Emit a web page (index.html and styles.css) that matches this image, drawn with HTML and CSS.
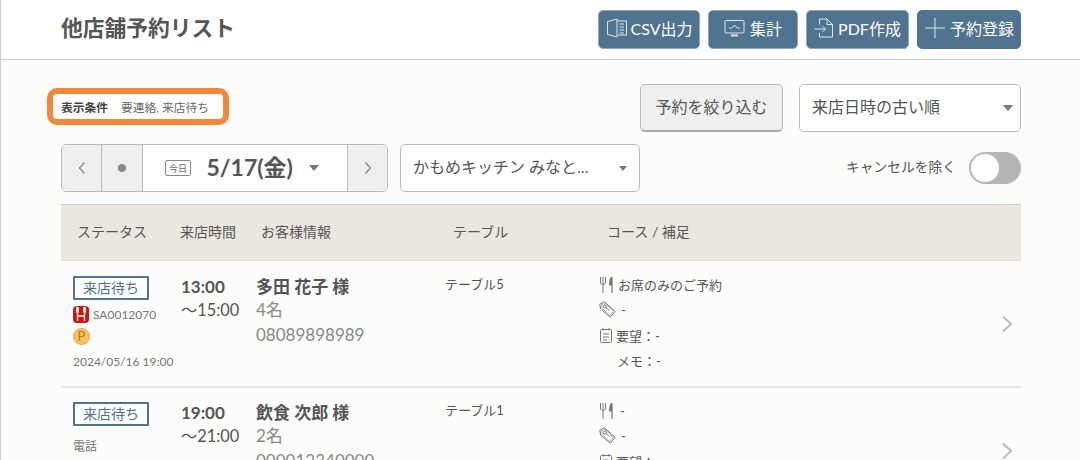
FILE: index.html
```html
<!DOCTYPE html>
<html lang="ja">
<head>
<meta charset="utf-8">
<title>他店舗予約リスト</title>
<link rel="stylesheet" href="styles.css">
</head>
<body>
<div class="page">
  <header class="topbar">
    <h1 class="title">他店舗予約リスト</h1>
    <div class="actions">
      <button class="act act-csv">
        <svg class="ic" width="22" height="20" viewBox="0 0 22 20" fill="none" stroke="#dfe6ec" stroke-width="1"><path d="M1.500 3.500 11 1v18l-9.500-2.500Z"/><path d="M11 3h9.500v14H11"/><path d="M13.500 6h4.500M13.500 9h4.500M13.500 12h4.500M13.500 15h4.500"/></svg>
        <span>CSV出力</span>
      </button>
      <button class="act act-sum">
        <svg class="ic" width="21" height="18" viewBox="0 0 21 18" fill="none" stroke="#dfe6ec" stroke-width="1"><rect x="1" y="1.500" width="19" height="12.500" rx="1"/><path d="M5 9h3l2.500-3 2.500 3h3"/><path d="M7 16.500h7" stroke-width="2"/></svg>
        <span>集計</span>
      </button>
      <button class="act act-pdf">
        <svg class="ic" width="20" height="20" viewBox="0 0 20 20" fill="none" stroke="#dfe6ec" stroke-width="1"><path d="M5.500 6.500V1H13l5.500 5.500V19h-13v-4"/><path d="M13 1v5.500h5.500"/><path d="M.500 11h11M8.500 8l3 3-3 3"/></svg>
        <span>PDF作成</span>
      </button>
      <button class="act act-add">
        <svg class="ic" width="22" height="22" viewBox="0 0 22 22" fill="none" stroke="#dfe6ec" stroke-width="1"><path d="M11 1v20M1 11h20"/></svg>
        <span>予約登録</span>
      </button>
    </div>
  </header>
  <main class="content">
    <div class="row-filter">
      <div class="cond"><b>表示条件</b><span>要連絡, 来店待ち</span></div>
      <div class="filter-right">
        <button class="narrow">予約を絞り込む</button>
        <div class="select sort"><span>来店日時の古い順</span><i class="caret"></i></div>
      </div>
    </div>
    <div class="row-date">
      <div class="datenav">
        <div class="dn-btn dn-prev"><svg width="8" height="14" viewBox="0 0 8 14" fill="none" stroke="#888" stroke-width="1.300"><path d="M6.500 1.500 1.500 7l5 5.500"/></svg></div>
        <div class="dn-btn dn-dot"><i class="dot"></i></div>
        <div class="dn-mid"><span class="today">今日</span><span class="date">5/17(金)</span><i class="caret"></i></div>
        <div class="dn-btn dn-next"><svg width="8" height="14" viewBox="0 0 8 14" fill="none" stroke="#888" stroke-width="1.300"><path d="M1.500 1.500 6.500 7l-5 5.500"/></svg></div>
      </div>
      <div class="select shop"><span>かもめキッチン みなと...</span><i class="caret small"></i></div>
      <div class="toggle-wrap"><span>キャンセルを除く</span><div class="toggle"><i></i></div></div>
    </div>
    <div class="thead">
      <div class="c1">ステータス</div>
      <div class="c2">来店時間</div>
      <div class="c3">お客様情報</div>
      <div class="c4">テーブル</div>
      <div class="c5">コース / 補足</div>
    </div>
    <section class="rec">
      <div class="c1">
        <div class="badge">来店待ち</div>
        <div class="src"><svg width="16" height="17" viewBox="0 0 16 17"><rect width="16" height="17" rx="4" fill="#d5140f"/><path d="M4.500 6v9M11.500 6v9M4.500 10h7" stroke="#fff" stroke-width="1.300" fill="none"/><path d="M4.500 2v4M11.500 2v4" stroke="#fff" stroke-width="2.600" stroke-linecap="round" fill="none"/></svg><span>SA0012070</span></div>
        <div class="point">P</div>
        <div class="stamp">2024/05/16 19:00</div>
      </div>
      <div class="c2"><div class="t-main">13:00</div><div class="t-sub">〜15:00</div></div>
      <div class="c3"><div class="name">多田 花子 様</div><div class="info">4名</div><div class="info">08089898989</div></div>
      <div class="c4 tbl">テーブル5</div>
      <div class="c5 notes">
        <div class="note"><svg class="ni" width="16" height="18" viewBox="0 0 16 18" fill="none" stroke="#777"><path d="M1.500 1v5c0 2 1.500 2.500 2.500 2.500S6.500 8 6.500 6V1M4 1v16"/><path d="M12.500 1C10.800 2.500 10.500 6 10.500 9h2V1Z" fill="#777"/><path d="M13 1v16" stroke-width="1.200"/></svg><span>お席のみのご予約</span></div>
        <div class="note"><svg class="ni" width="17" height="17" viewBox="0 0 17 17" fill="none" stroke="#777"><path d="M.800 3 5.500.800l10.700 9.700-5 5.700L1.500 8Z"/><path d="M2.500 3.800 5.800 2.400l8.700 8-3.500 4L3 7.300Z" stroke-width=".6"/><circle cx="5.800" cy="5.500" r="1.500"/><path d="M7 6.500l3.500 3"/></svg><span class="dash">-</span></div>
        <div class="note"><svg class="ni" width="14" height="16" viewBox="0 0 14 16" fill="none" stroke="#777"><rect x="1.500" y="2.500" width="11" height="13" rx="1"/><path d="M4 1v2.500M10 1v2.500M4 7h6M4 10h6M4 13h4"/></svg><span>要望：-</span></div>
        <div class="note memo"><span>メモ：-</span></div>
      </div>
      <div class="chev"><svg width="12" height="18" viewBox="0 0 12 18" fill="none" stroke="#bbb" stroke-width="2"><path d="M2 1.500 10 9l-8 7.500"/></svg></div>
    </section>
    <section class="rec">
      <div class="c1">
        <div class="badge">来店待ち</div>
        <div class="src phone">電話</div>
      </div>
      <div class="c2"><div class="t-main">19:00</div><div class="t-sub">〜21:00</div></div>
      <div class="c3"><div class="name">飲食 次郎 様</div><div class="info">2名</div><div class="info">000012340000</div></div>
      <div class="c4 tbl">テーブル1</div>
      <div class="c5 notes">
        <div class="note"><svg class="ni" width="16" height="18" viewBox="0 0 16 18" fill="none" stroke="#777"><path d="M1.500 1v5c0 2 1.500 2.500 2.500 2.500S6.500 8 6.500 6V1M4 1v16"/><path d="M12.500 1C10.800 2.500 10.500 6 10.500 9h2V1Z" fill="#777"/><path d="M13 1v16" stroke-width="1.200"/></svg><span class="dash">-</span></div>
        <div class="note"><svg class="ni" width="17" height="17" viewBox="0 0 17 17" fill="none" stroke="#777"><path d="M.800 3 5.500.800l10.700 9.700-5 5.700L1.500 8Z"/><path d="M2.500 3.800 5.800 2.400l8.700 8-3.500 4L3 7.300Z" stroke-width=".6"/><circle cx="5.800" cy="5.500" r="1.500"/><path d="M7 6.500l3.500 3"/></svg><span class="dash">-</span></div>
        <div class="note"><svg class="ni" width="14" height="16" viewBox="0 0 14 16" fill="none" stroke="#777"><rect x="1.500" y="2.500" width="11" height="13" rx="1"/><path d="M4 1v2.500M10 1v2.500M4 7h6M4 10h6M4 13h4"/></svg><span>要望：-</span></div>
      </div>
      <div class="chev"><svg width="12" height="18" viewBox="0 0 12 18" fill="none" stroke="#bbb" stroke-width="2"><path d="M2 1.500 10 9l-8 7.500"/></svg></div>
    </section>
  </main>
</div>
</body>
</html>
```
FILE: styles.css
```css
* { box-sizing: border-box; }
html, body { margin: 0; padding: 0; height: 460px; overflow: hidden; }
body { font-family: "Lato", "Noto Sans CJK JP", sans-serif; color: #555; background: #fcfcfa; }
.page { height: 460px; overflow: hidden; border-left: 1px solid #ccc; }
button { font-family: inherit; margin: 0; }
.topbar { height: 60px; background: #fff; border-bottom: 1px solid #ccc; display: flex; align-items: center; justify-content: space-between; padding: 0 59px 0 60px; }
.title { margin: 0 0 6px; font-size: 21.750px; font-weight: 700; color: #555; }
.actions { display: flex; gap: 8px; margin-top: -1px; }
.act { height: 39px; border: 1px solid #8fa6b8; border-radius: 5px; background: #507390; color: #fff; font-size: 16px; display: flex; align-items: center; justify-content: center; padding: 0 0 2px; }
.act-csv { width: 102px; gap: 3px; }
.act-sum { width: 90px; gap: 5px; }
.act-pdf { width: 103px; gap: 4px; }
.act-add { width: 104px; gap: 4px; border-color: #507390; }
.content { padding: 0 59px 0 60px; }
.row-filter { display: flex; justify-content: space-between; align-items: flex-start; padding-top: 24px; }
.cond { margin: 4px 0 0 -14px; width: 182px; height: 37px; border: 6px solid #f0873a; border-radius: 10px; background: #fff; display: flex; align-items: center; padding: 0 0 1px 8px; font-size: 12px; gap: 13px; }
.cond b { font-weight: 700; color: #444; font-size: 11.750px; }
.cond span { color: #666; white-space: nowrap; font-size: 11.750px; }
.filter-right { display: flex; gap: 16px; }
.narrow { width: 143px; height: 48px; background: #efefef; border: 1px solid #bbb; border-bottom: 2px solid #aaa; border-radius: 5px; color: #555; font-size: 16px; padding: 0 0 4px; }
.select { background: #fff; border: 1px solid #bbb; border-radius: 5px; height: 48px; display: flex; align-items: center; justify-content: space-between; color: #555; font-size: 16px; }
.select span { padding-bottom: 4px; white-space: nowrap; }
.sort { width: 222px; padding: 0 7px 0 12px; }
.caret { display: block; width: 0; height: 0; border-left: 5.500px solid transparent; border-right: 5.500px solid transparent; border-top: 6px solid #777; }
.caret.small { border-left-width: 4px; border-right-width: 4px; border-top-width: 5px; }
.row-date { display: flex; align-items: center; margin-top: 12px; height: 48px; }
.datenav { width: 327px; height: 48px; border: 1px solid #bbb; border-radius: 5px; display: flex; overflow: hidden; background: #fff; }
.dn-btn { background: #efefef; display: flex; align-items: center; justify-content: center; }
.dn-prev { width: 40px; border-right: 1px solid #bbb; }
.dn-dot { width: 41px; border-right: 1px solid #bbb; }
.dot { width: 8px; height: 8px; border-radius: 50%; background: #888; display: block; }
.dn-mid { flex: 1; display: flex; align-items: center; padding-left: 22px; }
.today { width: 26px; height: 16px; border: 1px solid #888; border-radius: 2px; font-size: 9px; display: flex; align-items: center; justify-content: center; color: #666; }
.date { font-size: 23px; font-weight: 700; color: #555; margin: 0 16px 0 15.500px; padding-bottom: 4px; white-space: nowrap; }
.dn-next { width: 40px; border-left: 1px solid #bbb; }
.shop { width: 240px; margin-left: 12px; padding: 0 12px 0 12px; }
.toggle-wrap { margin-left: auto; display: flex; align-items: center; gap: 13px; font-size: 13.750px; color: #555; }
.toggle-wrap span { padding-bottom: 4px; white-space: nowrap; }
.toggle { width: 52px; height: 32px; border-radius: 16px; background: #b5b5b5; padding: 2px; }
.toggle i { display: block; width: 28px; height: 28px; border-radius: 50%; background: #fff; }
.thead { margin-top: 12px; height: 57px; background: #ebe7e0; border-top: 1px solid #ccc; border-bottom: 1px solid #ddd; display: flex; align-items: center; font-size: 14px; color: #555; padding-bottom: 3px; }
.thead .c1 { padding-left: 16px; }
.thead .c1 { width: 119px; flex: none; }
.thead .c2 { width: 81px; flex: none; }
.thead .c3 { width: 192px; flex: none; }
.thead .c4 { width: 154px; flex: none; }
.thead .c5 { flex: 1; }
.rec { position: relative; display: flex; height: 127px; border-bottom: 2px solid #e5e5e3; padding: 15px 0 0 12px; }
.rec + .rec { padding-top: 14px; }
.rec .c1 { width: 108px; flex: none; }
.rec .c2 { width: 75px; flex: none; }
.rec .c3 { width: 189px; flex: none; }
.rec .c4 { width: 154px; flex: none; font-size: 13px; line-height: 16px; }
.badge { width: 76px; height: 24px; border: 2px solid #507390; border-radius: 1px; color: #507390; background: #fff; font-size: 14px; line-height: 19px; text-align: center; }
.src { display: flex; align-items: center; gap: 4px; margin-top: 5px; font-size: 12px; color: #777; height: 18px; }
.src.phone { margin-top: 10px; }
.point { margin-top: 5px; width: 17px; height: 17px; border-radius: 50%; background: #f4c161; border: 1px solid #e8a94a; color: #b97a10; font-size: 13px; line-height: 14px; text-align: center; }
.stamp { margin-top: 9px; font-size: 12px; color: #777; white-space: nowrap; }
.t-main { font-size: 17px; font-weight: 700; line-height: 22px; color: #555; }
.t-sub { font-size: 16.300px; line-height: 22px; margin-top: 1px; color: #555; white-space: nowrap; }
.name { font-size: 17px; font-weight: 700; line-height: 22px; color: #555; }
.info { font-size: 17px; line-height: 24.500px; color: #888; }
.notes { font-size: 13px; color: #555; }
.note { display: flex; align-items: center; height: 25.300px; gap: 3px; }
.note:first-child { margin-top: -4px; }
.note.memo { padding-left: 18px; }
.note .ni { flex: none; }
.dash { margin-left: 2px; }
.chev { position: absolute; right: 8px; top: 54px; }
```
